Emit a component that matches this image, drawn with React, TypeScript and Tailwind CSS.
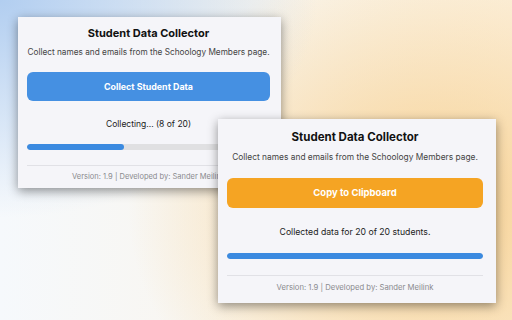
const cards = [
  {
    key: "collecting",
    pos: "left-[18px] top-[17px] w-[263px]",
    button: "Collect Student Data",
    buttonColor: "bg-[#4590e2]",
    status: "Collecting... (8 of 20)",
    progress: 40,
    big: false,
  },
  {
    key: "done",
    pos: "left-[218px] top-[119px] w-[278px]",
    button: "Copy to Clipboard",
    buttonColor: "bg-[#f5a423]",
    status: "Collected data for 20 of 20 students.",
    progress: 100,
    big: true,
  },
];

function Card({ card }: { card: (typeof cards)[number] }) {
  const big = card.big;
  return (
    <div
      className={`absolute ${card.pos} bg-[#f5f5f9] shadow-[0_3px_10px_rgba(0,0,0,0.42)] ${
        big ? "pl-[9px] pr-[13px] pt-[10px] pb-[10px]" : "pl-[9px] pr-[11px] pt-[8px] pb-[6px]"
      }`}
    >
      <h1
        className={`text-center font-bold text-[#111] leading-[16px] ${
          big ? "text-[11.5px]" : "text-[11px]"
        }`}
      >
        Student Data Collector
      </h1>
      <p
        className={`text-center text-[#444] leading-[12px] whitespace-nowrap ${
          big ? "mt-[6px] text-[8.4px]" : "mt-[5px] text-[8.25px]"
        }`}
      >
        Collect names and emails from the Schoology Members page.
      </p>
      <button
        className={`block w-full ${card.buttonColor} text-white font-bold rounded-[6px] ${
          big
            ? "mt-[15px] h-[30px] text-[9.5px]"
            : "mt-[14px] h-[29px] text-[8.9px]"
        }`}
      >
        {card.button}
      </button>
      <p
        className={`text-center text-[#222] leading-[12px] ${
          big ? "mt-[18px] text-[8.7px]" : "mt-[17px] text-[8.5px]"
        }`}
      >
        {card.status}
      </p>
      <div
        className={`h-[6px] rounded-full bg-[#e0e0e2] overflow-hidden ${
          big ? "mt-[15px]" : "mt-[14px]"
        }`}
      >
        <div
          className="h-full rounded-full bg-[#3b8ae0]"
          style={{ width: `${card.progress}%` }}
        />
      </div>
      <div
        className={`border-t border-[#e1e1e6] ${big ? "mt-[16px]" : "mt-[15px]"}`}
      />
      <p
        className={`text-center text-[#8a8a8e] leading-[10px] ${
          big ? "mt-[7px] text-[7.7px]" : "mt-[6px] text-[7.5px]"
        }`}
      >
        Version: 1.9 | Developed by: Sander Meilink
      </p>
    </div>
  );
}

export default function App() {
  return (
    <div
      className="relative w-[512px] h-[320px] overflow-hidden bg-[radial-gradient(ellipse_62%_68%_at_0%_0%,#b2cef0_0%,rgba(178,206,240,0)_100%),radial-gradient(ellipse_60%_80%_at_85%_65%,#f7d193_0%,rgba(247,209,147,0)_100%),linear-gradient(90deg,#f6f9fc_0%,#fcf1de_100%)]"
      style={{ fontFamily: "Inter, 'Noto Sans', sans-serif" }}
    >
      {cards.map((c) => (
        <Card key={c.key} card={c} />
      ))}
    </div>
  );
}
